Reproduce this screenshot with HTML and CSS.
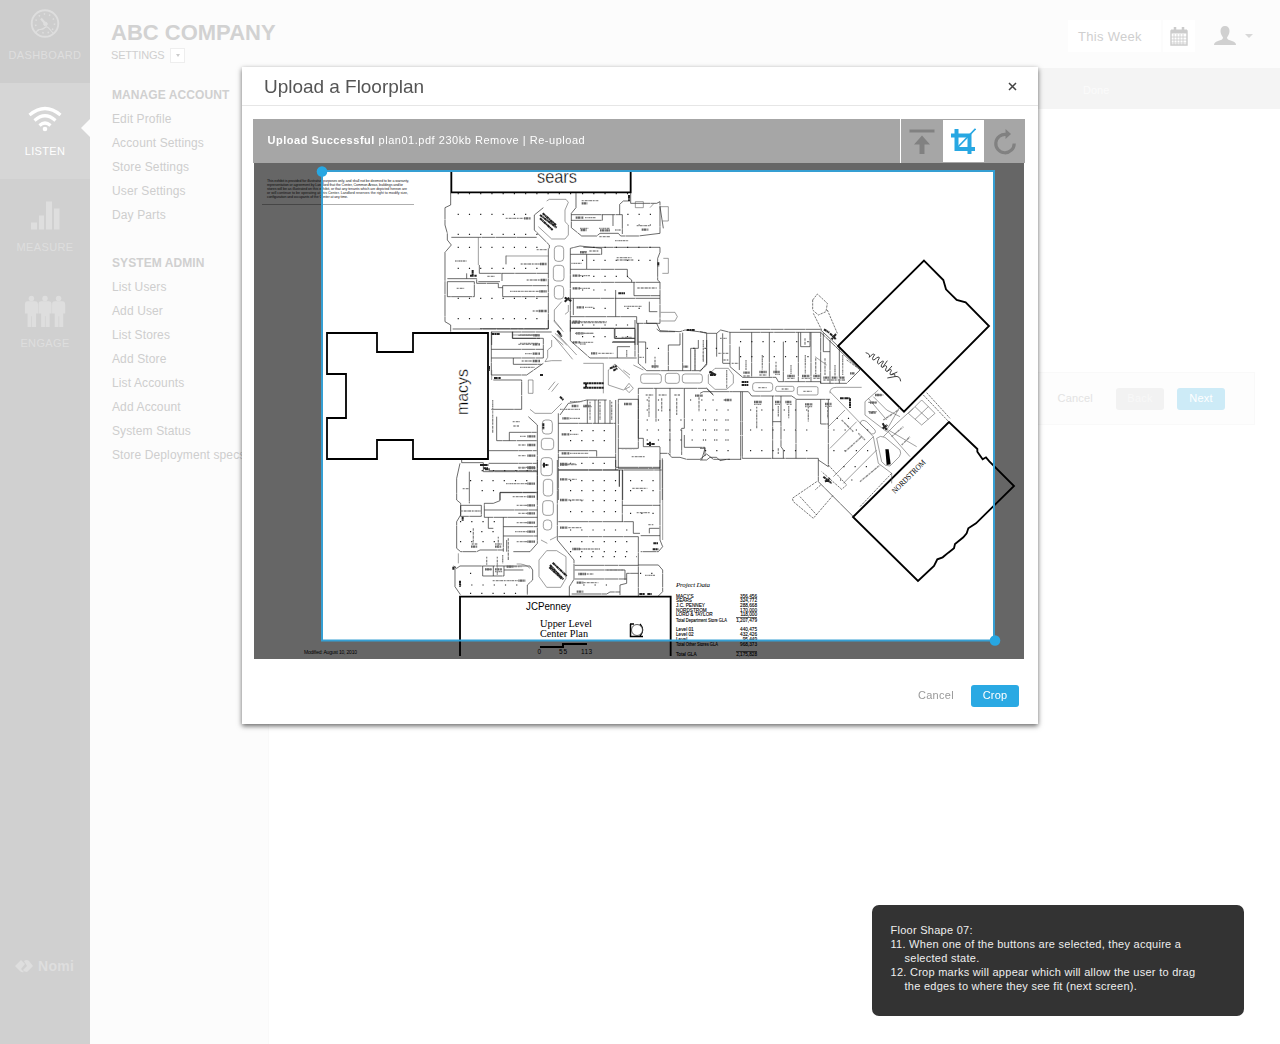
FILE: index.html
```html
<!DOCTYPE html>
<html lang="en">
<head>
<meta charset="utf-8">
<title>Upload a Floorplan</title>
<link rel="stylesheet" href="styles.css">
</head>
<body>
<div class="app">
  <nav class="rail">
    <a class="rail-item first">
      <svg width="32" height="32" viewBox="0 0 32 32" fill="none" stroke="currentColor"><circle cx="16" cy="16" r="13.3" stroke-width="1.9"/><circle cx="16" cy="16" r="9.5" stroke-width="1.6" stroke-dasharray="1.4 4"/><path d="M12 11L17 17" stroke-width="2.2"/><circle cx="16.500" cy="16.500" r="1.800" fill="currentColor"/><path d="M7 26Q8 22 11 22T16 20T21 22T25 26" stroke-width="1.2"/></svg>
      <span>DASHBOARD</span>
    </a>
    <a class="rail-item active">
      <svg width="36" height="32" viewBox="0 0 36 32" fill="none" stroke="currentColor" stroke-width="3.200"><path d="M2.500 11.500Q18-1.500 33.500 11.500M7.500 17Q18 7.500 28.500 17M12.500 22Q18 17 23.500 22"/><circle cx="18" cy="25.500" r="2.300" fill="currentColor" stroke="none"/></svg>
      <span>LISTEN</span>
    </a>
    <a class="rail-item">
      <svg width="32" height="32" viewBox="0 0 32 32" fill="currentColor"><path d="M2 23h6v7H2zM10 16h5v14h-5zM17 2h6v28h-6zM25 9h5.500v21H25z"/></svg>
      <span>MEASURE</span>
    </a>
    <a class="rail-item">
      <svg width="42" height="34" viewBox="0 0 42 34" fill="currentColor"><g id="man"><circle cx="7" cy="3.500" r="2.800"/><path d="M3 6.500h8q2.800 0 2.800 3.500v9h-2v14H7.600V22H6.900v11H3V19H.300v-9q0-3.500 2.700-3.500z"/></g><use href="#man" x="14"/><use href="#man" x="28"/></svg>
      <span>ENGAGE</span>
    </a>
    <div class="brand">
      <svg width="19" height="14" viewBox="0 0 19 14" fill="currentColor"><path d="M6 1l4 4-4 5 3 3q-2 1-4-1L0 7z"/><path d="M9 2q3-2 5 0l4 5-6 6q-3 0-4-2l4-4z"/></svg>
      <span>Nomi</span>
    </div>
  </nav>

  <div class="main">
    <header class="top">
      <div>
        <h1>ABC COMPANY</h1>
        <div class="crumb">SETTINGS <span class="drop"><i></i></span></div>
      </div>
      <div class="tools">
        <span class="week">This Week</span>
        <span class="cal"><svg width="18" height="19" viewBox="0 0 18 19" fill="none" stroke="currentColor"><path d="M1 4h16v14H1z" stroke-width="1.400"/><path d="M1 4.500h16" stroke-width="4"/><path d="M1 10h16M1 13h16M1 16h16M4 7v11M7 7v11M10 7v11M13 7v11" stroke-width=".8"/><path d="M5 0v5M13 0v5" stroke-width="2.500"/></svg></span>
        <svg class="user" width="24" height="20" viewBox="0 0 24 20" fill="currentColor"><path d="M12 0c3 0 4.500 2 4.500 5S15 10 14 11.500c0 2 2 2.500 5 3.500 3 1 4 2 4 4H1c0-2 1-3 4-4 3-1 5-1.500 5-3.500C9 10 7.500 8 7.500 5S9 0 12 0z"/></svg>
        <i class="caret"></i>
      </div>
    </header>
    <div class="body">
      <aside class="side">
        <h2>MANAGE ACCOUNT</h2>
        <ul><li>Edit Profile</li><li>Account Settings</li><li>Store Settings</li><li>User Settings</li><li>Day Parts</li></ul>
        <h2>SYSTEM ADMIN</h2>
        <ul><li>List Users</li><li>Add User</li><li>List Stores</li><li>Add Store</li><li>List Accounts</li><li>Add Account</li><li>System Status</li><li>Store Deployment specs</li></ul>
      </aside>
      <section class="content">
        <div class="bar"><span>Done</span></div>
        <div class="actions"><span class="cancel">Cancel</span><span class="btn back">Back</span><span class="btn next">Next</span></div>
      </section>
    </div>
  </div>
</div>

<div class="overlay">
  <div class="modal">
    <div class="modal-head"><span>Upload a Floorplan</span>
      <svg width="9" height="9" viewBox="0 0 9 9" stroke="#444" stroke-width="1.500"><path d="M1 1l7 7M8 1L1 8"/></svg>
    </div>
    <div class="strip">
      <p><b>Upload Successful</b> plan01.pdf 230kb Remove | Re-upload</p>
      <span class="tool line"><svg width="26" height="26" viewBox="0 0 26 26" fill="currentColor"><path d="M.500 .5h25v3H.500zM13 6.500l8 9h-5.500V25h-5v-9.500H5z"/></svg></span>
      <span class="tool on"><svg width="26" height="27" viewBox="0 0 26 27" fill="none" stroke="currentColor"><path d="M6.500 1v20H25M1 7.500h18.500V26" stroke-width="4"/><path d="M7 20L25.500 .8" stroke-width="1.700"/></svg></span>
      <span class="tool"><svg width="24" height="26" viewBox="0 0 24 26" fill="none" stroke="currentColor"><path d="M13.500 5.500A9.200 9.200 0 1 0 21.200 14.500" stroke-width="3.200"/><path d="M12.500 0l5.500 5-5.500 5z" fill="currentColor" stroke="none"/></svg></span>
    </div>
    <svg class="plan" width="770" height="496" viewBox="254 163 770 496">
      <rect x="254" y="163" width="770" height="496" fill="#fff"/>
      <g class="fine">
        <text x="267" y="181.500" textLength="142">This exhibit is provided for illustrative purposes only, and shall not be deemed to be a warranty,</text>
        <text x="267" y="185.700" textLength="136">representation or agreement by Landlord that the Center, Common Areas, buildings and/or</text>
        <text x="267" y="189.900" textLength="140">stores will be as illustrated on this exhibit, or that any tenants which are depicted hereon are</text>
        <text x="267" y="194.100" textLength="141">or will continue to be operating at this Center. Landlord reserves the right to modify size,</text>
        <text x="267" y="198.300" textLength="81">configuration and occupants of the Center at any time.</text>
      </g>
      <path d="M262 204.500H414" stroke="#777" stroke-width=".6"/>
      <path class="heavy" d="M327 333H377V352H413V333H488V459H413V440H377V459H327V418H346V374H327Z"/>

      <g transform="translate(430 165) scale(.33333)">
        <path class="heavy3" d="M64 20V82H602V20"/>
        <path class="wall" d="M62 84V120L45 128V180L52 205V225L64 240L45 262V470L62 480V500M64 217H320M52 341H140V355H205V368H218M52 350H133V395H52V350M148 300V325H355M145 350H210M216 325V348M218 362H355M218 362V395H355M228 272V298M355 250V492M68 492H355M438 84V128L424 145V188L455 213H500L510 205H565L572 213H625L690 205M424 149H577V207M424 166H517V149M549 149V183M569 149V118L580 108H600M602 84V115H680L690 110V205M421 268H515V250L450 243L421 250V500M460 247H690M470 268V312M421 313H592V335L605 345V352M421 352H690M612 352V392H690M557 375V455M421 400H690V475H620V455H421M421 490H615V540M430 400V450M690 247V262L683 280V345L690 352V400M658 410V440H682M185 500V540M248 500V520H330M548 530H615M622 475V540M340 128L313 150V195L358 240V250M555 490V520H615M690 125L700 190M110 325V341M680 492L690 500H735"/>
        <path class="thin" d="M145 217V300M228 273H355M350 108L358 103H408L415 112L405 135V170L415 180V210L405 222H365L325 185M395 410L373 435V470L400 500M415 420V440L405 448M690 125H715V168H697M700 280H715V325H697M692 442H735L742 455L735 468H692M616 128V110H640V128H616M365 510L400 540M375 505L410 540M248 510H330M660 128L672 115"/>
        <g class="thin"><rect x="373" y="243" width="28" height="46" rx="10"/><rect x="370" y="301" width="32" height="47" rx="10"/><rect x="373" y="362" width="28" height="40" rx="10"/></g>
        <path class="dots" d="M83 86H440M83 148H310M83 208H350M83 247H350M83 310H350M83 400H350M83 461H350M456 86H600M592 148H680M592 180H680M456 286H680M490 247H680M456 334H600M456 375H550M490 430H550M592 430H650M456 480H600M456 515H600"/>
        <path class="lbl" d="M227 160H280M320 254H350M272 297H330M290 345H335M240 379H330M308 438H325M75 288H110M80 370H103M172 334H195M455 107H505M465 158H497M450 190H475M507 190H540M555 195H572M620 182H660M508 215H540M555 227H595M450 260H470M478 258H505M420 295H455M560 278H605M560 285H610M450 332H480M450 370H480M622 369H680M465 427H490M582 424H635M450 470H530M460 505H490M450 532H490M270 510H325M270 535H325"/>
        <path class="tag" d="M282 160H302M330 297H350M332 345H350M328 379H350M326 438H350M437 158H460M510 196H540M428 332H450M428 370H450M440 427H462M428 470H450M438 505H460M428 532H450M635 194H655M450 262H470M452 195H470M455 115H472"/>
        <path class="mark" d="M330 150L380 188M338 145L378 180M330 160L368 195M404 398L424 408M404 410L418 398M597 90V108M120 332H140M128 315V330M565 385H585M685 292V304M385 500L395 515"/>
      </g>

      <g transform="translate(480 320) scale(.33333)">
        <path class="wall" d="M0 26H205V0M34 36V165M34 36H215M97 36V55H190M34 88H190M34 114H190V55M100 114V133H185M34 165H140L190 130M40 180H125V268H34M271 0V62L330 114H470M271 25H465M403 25V55H465M396 67H465M412 114V80H450M465 0V110M475 10V130L500 152H660L680 135V60M497 130V66H475M500 0V10H530L540 32L600 35L615 30L680 38M600 40V75H565V152M608 38V152M632 85V152M645 85V152M655 60V85H632M240 285L265 250L300 245L320 240H380M235 280V310H407V240M322 240V310M345 240V310M355 240V310M375 240V310M390 240V310M235 310V540M407 310V450M235 392H350V412H407M235 450H545M415 445V238H475V385H415M415 445H540M475 355H490V380H540V400H565L575 412H600L620 418H660L680 402L700 418H750M475 355V205H680L700 225M528 205V305M570 205V405M613 205V325H605V405M613 345V382H675V408M547 415V540M540 400V445M428 450V540M418 450V500M50 290V362H170M88 362V337H170M26 392H170M26 430H170M26 452H170M60 540V517H170M172 315V540M145 290L172 315M235 412H350"/>
        <path class="thin" d="M222 0L245 28M222 50L278 118M232 42L290 105M215 60V80L203 90V112L195 125L215 122H245M310 130H370V220M150 268L165 280H215L245 250M145 180H159V220H145ZM385 150L405 132L450 175M450 200L430 210L385 195V150M435 205L447 190L460 205L447 218ZM430 150L450 165M460 135L490 150M35 180V150M205 210L225 185M215 215L235 190"/>
        <g class="thin"><rect x="482" y="162" width="62" height="28" rx="8"/><rect x="556" y="160" width="42" height="30" rx="8"/><rect x="607" y="162" width="60" height="27" rx="8"/><rect x="187" y="300" width="30" height="42" rx="10"/><rect x="184" y="355" width="37" height="34" rx="10"/></g>
        <path class="dots" d="M270 332H400M270 362H400M270 430H400M5 452H165M500 85H560M500 240H560M500 270H600M500 300H740M500 330H740M630 240H740M500 360H740M640 85H740"/>
        <path class="lbl" d="M115 46H160M115 73H155M135 101H155M125 123H155M120 142H165M302 8H380M285 40H340M300 72H318M355 100H400M425 52H455M270 245H305M310 260H335M240 268H300M270 295H300M270 343H295M270 400H325M262 434H290M120 349H138M115 375H138M115 407H138M115 444H138M425 386H470M455 410H495M98 305H120M497 225H520M536 225H560M583 225H600M100 318H118M515 138H535M478 112H492"/>
        <path class="tag" d="M160 46H180M158 73H180M158 101H180M158 123H180M275 8H300M333 100H352M247 295H268M245 343H268M245 400H268M240 434H262M142 349H166M142 375H166M142 407H166M142 444H166M432 252H455M645 227H668M515 140H535M610 140H625M275 258H295M310 258H332"/>
        <path class="lbl" d="M38 240V340M507 230V290M545 235V275M590 235V285M657 232V275M670 60V120M645 90V150M330 245V300M360 245V300M395 245V300M525 110V145M440 90V110"/>
        <path class="mark" d="M310 190H372M310 203H372M318 188V205M390 145L410 138M400 152L412 145M180 165H190M232 32L242 44M42 174H62M240 230L250 240M190 310V328M35 42H60M0 435H20M10 445H25M500 372H525M690 155L705 165M27 138V152M510 365V378M620 30H645"/>
      </g>

      <g transform="translate(700 250) scale(.33333)">
        <path class="heavy3" d="M672 32L730 90L738 118L770 150L797 157L867 228L612 485L414 288Z"/>
        <path class="heavy3" d="M747 516L459 801L654 993L702 948L712 928L728 922L745 908L762 895L765 882L790 862L800 850L805 835L828 820L942 708L868 634L858 622L848 628L832 605V597Z"/>
        <path class="wall" d="M120 238H360L414 288M90 247H362V400M0 245L20 250H50L62 240L90 247V350L128 382M20 250V340L0 365M68 250V340H90M50 250V320M118 290V360M155 247V382M208 247V382M250 275V395M295 247V395M302 247V290H330V247M333 247V395M390 270V400M418 295V400M128 382H228L235 395H362V400H440L480 360L362 247M370 250V305H390M98 425H145L155 438H275L290 448H390M122 425V630M127 425V625H355V695L460 800M218 438V625M243 438V590L250 600V625M288 448V625M362 448V522H385M385 448V650M218 515H243M0 430L10 425H98M20 415L40 435M0 630H20L30 622H50L60 632L80 628H122M355 630L385 650M0 595H15L5 630"/>
        <path class="thin" d="M25 375L45 355H85L100 375V400L80 418H45L25 400ZM390 430Q388 412 410 412H485M390 425L520 560L535 640L575 670V700M495 455V495L560 545M535 420L495 455M530 565Q540 555 555 562L600 600Q605 610 598 620L570 648Q555 650 545 635ZM480 520Q485 505 500 515L525 540Q530 552 515 552ZM435 480L385 530M470 515L390 595M530 600L430 700M520 560L400 680M345 320L380 345M600 470L560 540L630 620M625 490L665 450L705 490L665 525ZM645 508L685 470M645 470L685 508M640 475L590 520L550 560M520 440L560 480L600 500M505 445L560 510M565 540L650 590"/>
        <path class="dash" d="M338 150L352 132L382 160L378 185L355 195L338 180ZM340 190L365 240M382 180L412 250M670 435L747 516M680 428L750 505M350 695L277 745L280 755L340 805L400 735M362 705L345 720M300 740L350 795M385 645L440 705L425 718L365 665M440 330L475 355M575 670L480 770"/>
        <g class="thin"><rect x="158" y="398" width="60" height="26" rx="8"/><rect x="227" y="409" width="55" height="15" rx="5"/><rect x="292" y="410" width="62" height="25" rx="5"/></g>
        <path class="dots" d="M15 480H110M15 510H110M15 540H110M15 570H110M15 602H110M150 480H350M150 540H350M150 602H350M120 275H330M120 320H330M400 540H520M400 602H520M430 650H530M420 690H480M410 505H450"/>
        <path class="lbl" d="M60 265H80M55 310H85M70 330H85M130 378H150M178 375H200M225 373H240M262 385H285M305 385H330M340 385H360M370 390H435M162 463H185M225 463H240M260 463H275M315 470H338M375 469H395M175 413H200M245 417H265M505 457H530M505 485H530M525 435H550M310 424H335M95 340H115"/>
        <path class="tag" d="M130 368H150M178 366H200M220 366H240M262 378H284M306 378H328M340 378H360M370 383H388M395 383H412M420 383H435M450 370H465M162 456H185M225 456H242M256 456H275M315 463H337M375 462H395M75 450H95M510 458H530M508 488H528M525 435H545"/>
        <path class="lbl" d="M138 330V360M187 315V360M228 335V362M273 345V372M316 315V372M347 325V372M375 325V375M405 345V378M428 315V375M170 470V535M235 468V500M266 468V505M325 470V515M383 470V505M80 360V415M10 305V335M235 595V612M315 265V285M425 510L460 545M475 550L495 570M435 605L485 560M480 695L540 645M550 510L595 480M605 585L630 560M575 560L610 530"/>
        <path class="mark" d="M28 365L48 375M30 375H45M125 396H145M125 405H145M420 445H450V475M390 250L408 268M408 252L395 268M372 238L388 248M548 520L560 540M548 535L562 525M370 680L395 700M375 695L390 685"/>
        <path d="M556 598H566L572 643L560 645Z"/>
        <path d="M497 308Q512 312 508 322Q520 308 524 314Q512 330 522 330Q538 316 538 324Q528 340 536 342Q552 328 550 336Q538 352 548 352L562 332M548 352Q560 342 560 352Q552 364 562 364L576 348M562 364Q574 354 574 362Q566 376 574 374L592 366M574 374Q588 368 584 380L562 384M584 380Q600 376 602 394" fill="none" stroke="#222" stroke-width="2.600"/>
      </g>

      <g transform="translate(440 460) scale(.33333)">
        <path class="heavy3" d="M60 588V410H692V588"/>
        <path class="wall" d="M65 0V8H130V35H292M60 10L50 55V120L62 130V165L50 185V265L62 275H110L120 270H190M190 172V275M220 275H270L292 250V0M180 122V98H292M292 172H133V130H160L180 122M133 150H292M62 136H124V169H62ZM88 35V130M145 172V205H160M190 200H292M190 228H292M200 240V275M40 318L50 325L60 318H270L278 330V360L262 375V405M45 318V380L62 405M128 318V348H192V318M192 330H250M160 318V348M352 0V240L402 300V358L388 380V408M355 30H535M527 0V22H660M547 30V185M355 185H580V220H600M547 136H660M355 230H595V408M660 0V240L668 260L655 275H602M602 227H660M628 220V205H658M404 316H595M404 330H555V360M404 357H560M540 405V375L560 370V340H595M595 315H655L668 330V395L655 408M538 30V80M395 402H500L510 396H540"/>
        <path class="thin" d="M320 272H350L378 290V355L362 382H320L297 350V300ZM303 240L322 250M330 240L350 230M55 280V310M230 312Q255 310 270 325M668 0V240"/>
        <g class="thin"><rect x="303" y="-7" width="34" height="54" rx="10"/><rect x="310" y="58" width="28" height="50" rx="10"/><rect x="308" y="122" width="32" height="44" rx="10"/><rect x="310" y="180" width="25" height="30" rx="10"/></g>
        <path class="dots" d="M90 62H280M125 92H180M90 215H180M60 185H180M60 245H180M390 62H530M390 92H530M390 122H530M390 155H530M390 210H590M390 245H590M390 275H590M420 290H590M570 62H650M570 92H650M570 160H650M90 340H120M60 375H250M90 400H250M430 375H530M600 340H650"/>
        <path class="lbl" d="M235 22H262M198 71H262M218 110H262M230 136H262M235 160H262M230 188H262M225 215H262M230 245H262M62 153H122M385 12H408M385 58H410M385 120H430M385 203H425M420 267H480M440 342H460M430 368H475M577 85H622M590 158H630M625 194H640M615 346H645M158 362H235M200 320H245M68 86H88M95 252H112M135 328H155M165 252H185M165 335H188M500 330H550"/>
        <path class="tag" d="M262 22H285M262 71H285M262 110H285M262 136H285M262 160H285M262 188H285M262 215H285M262 245H285M360 12H382M360 58H382M360 120H382M360 203H382M397 267H420M415 342H438M410 368H430M410 395H430M93 260H112M165 260H184M200 320H220M235 362H256M135 328H155M165 328H186"/>
        <path class="lbl" d="M100 205V250M175 230V262M140 290V315M172 290V345M205 235V300M188 285V310"/>
        <path class="mark" d="M330 315L370 358M338 308L380 348M328 322L365 356M308 15H325M312 8V24M128 15H145M135 28H150M640 250H655M638 268H655M60 362V380M598 402H615M622 402H635M40 320V330M68 170V182"/>
      </g>

      <g class="names">
        <text class="light" x="537" y="183" font-size="19" textLength="40" lengthAdjust="spacingAndGlyphs">sears</text>
        <text class="light" transform="translate(468 415) rotate(-90)" font-size="16" textLength="46" lengthAdjust="spacingAndGlyphs">macys</text>
        <text transform="translate(895 494) rotate(-45)" font-size="8" textLength="44" lengthAdjust="spacingAndGlyphs" class="serif">NORDSTROM</text>
        <text x="526" y="610" font-size="10.500" textLength="45" lengthAdjust="spacingAndGlyphs">JCPenney</text>
        <text x="540" y="627" font-size="10" textLength="52" lengthAdjust="spacingAndGlyphs" class="serif">Upper Level</text>
        <text x="540" y="636.500" font-size="9.500" textLength="48" lengthAdjust="spacingAndGlyphs" class="serif">Center Plan</text>
        <text x="304" y="654" font-size="5" textLength="53">Modified: August 10, 2010</text>
        <text x="537.500" y="654" font-size="6.500">0</text><text x="559" y="654" font-size="6.500" textLength="8">55</text><text x="581" y="654" font-size="6.500" textLength="11">113</text>
        <text x="676" y="587" font-size="7" textLength="34" class="serif it">Project Data</text>
      </g>
      <g class="data">
        <text x="676" y="597.500">MACY'S</text><text x="676" y="602">SEARS</text><text x="676" y="606.500">J.C. PENNEY</text><text x="676" y="611.500">NORDSTROM</text><text x="676" y="616">LORD &amp; TAYLOR</text><text x="676" y="622" textLength="51" lengthAdjust="spacingAndGlyphs">Total Department Store GLA</text>
        <text x="676" y="631">Level 01</text><text x="676" y="636">Level 02</text><text x="676" y="640.500">Level</text><text x="676" y="646" textLength="42" lengthAdjust="spacingAndGlyphs">Total Other Stores GLA</text><text x="676" y="656">Total GLA</text>
        <g text-anchor="end"><text x="757" y="597.500">356,456</text><text x="757" y="602">324,772</text><text x="757" y="606.500">288,668</text><text x="757" y="611.500">170,000</text><text x="757" y="616">118,000</text><text x="757" y="622">1,207,479</text><text x="757" y="631">440,475</text><text x="757" y="636">432,426</text><text x="757" y="640.500">95,449</text><text x="757" y="646">968,373</text><text x="757" y="656">2,175,828</text></g>
      </g>
      <path d="M736 617.500H757M736 651.500H757" stroke="#000" stroke-width=".6"/>
      <path d="M540 647H563V644H587" fill="none" stroke="#000" stroke-width="2"/>
      <path d="M630.500 624V636.500H643M630 624L634 624M640 624Q645 630 640 636" fill="none" stroke="#000" stroke-width="1.500"/><circle cx="637" cy="630" r="5.500" fill="#fff" stroke="#333" stroke-width=".8"/>

      <path class="shade" fill-rule="evenodd" d="M254 163H1024V659H254ZM322 171V640H994V171Z"/>
      <rect x="322" y="171" width="672" height="469.500" fill="none" stroke="#359fd3" stroke-width="2"/>
      <circle cx="322" cy="171.500" r="5.300" fill="#27a7e2"/><circle cx="995" cy="640.500" r="5.300" fill="#27a7e2"/>
    </svg>
    <div class="modal-foot"><span>Cancel</span><span class="btn crop">Crop</span></div>
  </div>
</div>

<div class="note">
  <p>Floor Shape 07:</p>
  <p class="step">11. When one of the buttons are selected, they acquire a<br>selected state.</p>
  <p class="step">12. Crop marks will appear which will allow the user to drag<br>the edges to where they see fit (next screen).</p>
</div>
</body>
</html>
```
FILE: styles.css
```css
* { box-sizing: border-box; margin: 0; padding: 0; }
body { width: 1280px; height: 1044px; overflow: hidden; background: #fff; font-family: "Liberation Sans", Arial, sans-serif; font-size: 11px; }
.app { display: flex; height: 1044px; }

.rail { width: 90px; background: #d0d0d0; color: #dedede; display: flex; flex-direction: column; }
.rail-item { height: 96px; padding-top: 20px; display: flex; flex-direction: column; align-items: center; position: relative; letter-spacing: .35px; }
.rail-item svg { height: 33px; flex: none; }
.rail-item span { margin-top: 8px; line-height: 14px; }
.rail-item.first { height: 83px; padding-top: 7px; background: #cdcdcd; }
.rail-item.active { background: #d6d6d6; color: #fff; }
.rail-item.active::after { content: ""; position: absolute; right: 0; top: 36px; border: 9px solid transparent; border-left: 0; border-right-color: #fcfcfc; }
.brand { margin-top: auto; margin-bottom: 69px; padding-left: 15px; display: flex; align-items: center; gap: 4px; font: bold 14px/18px "Liberation Sans", Arial, sans-serif; letter-spacing: .3px; }

.main { flex: 1; display: flex; flex-direction: column; }
.top { height: 68px; background: #fcfcfc; display: flex; justify-content: space-between; padding: 20px 27px 0 21px; color: #cfcfcf; }
h1 { font-size: 22px; line-height: 25px; color: #d2d2d2; }
.crumb { display: flex; align-items: center; gap: 6px; line-height: 15px; margin-top: 3px; letter-spacing: -.2px; }
.drop { width: 15px; height: 15px; border: 1px solid #eee; background: #fff; display: flex; align-items: center; justify-content: center; }
.drop i { border: 2px solid transparent; border-top: 3px solid #ccc; border-bottom: 0; }
.tools { display: flex; align-items: center; height: 32px; }
.week { width: 93px; height: 32px; padding-left: 10px; background: #fff; font-size: 13px; line-height: 34px; letter-spacing: .3px; }
.cal { width: 32px; height: 32px; margin-left: 2px; background: #fff; display: flex; align-items: center; justify-content: center; color: #ccc; }
.user { margin-left: 18px; color: #d0d0d0; }
.caret { margin-left: 8px; border: 4px solid transparent; border-top: 4px solid #d8d8d8; border-bottom: 0; }
.body { flex: 1; display: flex; }
.side { width: 179px; padding: 15px 0 0 22px; background: #fcfcfc; border-right: 1px solid #f9f9f9; color: #cecece; font-size: 12px; line-height: 24px; white-space: nowrap; }
.side h2 { font-size: 12px; color: #d0d0d0; letter-spacing: .08px; }
.side ul { list-style: none; margin-bottom: 24px; letter-spacing: .12px; }
.content { flex: 1; }
.bar { height: 41px; background: #f4f4f4; color: #fbfbfb; padding-left: 814px; line-height: 44px; }
.actions { height: 53px; width: 986px; margin-top: 263px; padding-right: 29px; border: 1px solid #f9f9f9; background: #fdfdfd; display: flex; align-items: center; justify-content: flex-end; }
.btn { width: 48px; height: 22px; border-radius: 3px; line-height: 21px; text-align: center; letter-spacing: .2px; color: #fff; }
.cancel { color: #e3e3e3; margin-right: 23px; letter-spacing: .2px; line-height: 21px; height: 22px; }
.back { background: #f2f2f2; color: #f8f8f8; margin-right: 13px; }
.next { background: #cdebf7; }

.overlay { position: fixed; inset: 0; display: flex; justify-content: center; align-items: flex-start; padding-top: 67px; }
.modal { width: 796px; height: 657px; background: #fff; box-shadow: 0 2px 5px rgba(0,0,0,.6); padding: 0 13px 0 11px; }
.modal-head { margin: 0 -13px 13px -11px; height: 39px; padding: 1px 21px 0 22px; border-bottom: 1px solid #e6e6e6; display: flex; align-items: center; justify-content: space-between; font-size: 19px; color: #555; letter-spacing: -.03px; }
.strip { height: 44px; background: #a6a6a6; display: flex; color: #fff; letter-spacing: .53px; }
.strip p { flex: 1; padding-left: 14.5px; line-height: 42px; }
.tool { width: 41px; padding-top: 2px; display: flex; align-items: center; justify-content: center; color: #818181; }
.tool.line { width: 43px; border-left: 1px solid #fff; padding-right: 1px; }
.tool.on { background: #fff; color: #27a7e2; margin: 1px 0; padding: 0 1px 0 0; }
.plan { display: block; margin-left: 1px; }
.modal-foot { display: flex; justify-content: flex-end; align-items: center; gap: 17px; height: 22px; line-height: 21px; margin: 26px 6px 0 0; color: #999; letter-spacing: .3px; }
.modal-foot span { height: 22px; }
.crop { background: #2aa9e3; }

.heavy, .heavy3, .wall, .thin, .dash, .dots, .lbl, .tag, .mark { fill: none; stroke: #000; }
.heavy { stroke-width: 1.8; }
.heavy3 { stroke-width: 5.5; }
.wall { stroke-width: 2; stroke: #222; stroke-dasharray: 90 1 40 1.5 63 1; }
.thin { stroke-width: 1.7; stroke: #555; }
.dash { stroke-width: 2; stroke: #333; stroke-dasharray: 7 3; }
.dots { stroke-width: 3.5; stroke: #222; stroke-dasharray: 3.5 30.2; }
.lbl { stroke-width: 4; stroke: #8a8a8a; stroke-dasharray: 5 1 2 2 7 1 3 1.5 9 2; }
.tag { stroke-width: 7; stroke: #666; stroke-dasharray: 4 1 8 1.5 3 1 6 1; }
.mark { stroke-width: 6; stroke: #222; stroke-dasharray: 9 1 4 1; }
.fine { font: 3.6px "Liberation Sans", Arial, sans-serif; fill: #222; }
.names { fill: #000; font-family: "Liberation Sans", Arial, sans-serif; }
.light { stroke: #fff; stroke-width: .35; }
.serif { font-family: "Liberation Serif", serif; }
.it { font-style: italic; }
.data { font-size: 4.7px; fill: #000; stroke: #000; stroke-width: .1; }
.shade { fill: rgba(0,0,0,.6); }

.note { position: absolute; left: 872px; top: 905px; width: 372px; height: 111px; border-radius: 7px; background: #333; color: #eee; padding: 18px 19px 0 18.5px; line-height: 14px; letter-spacing: .27px; }
.step { padding-left: 14px; text-indent: -14px; }
```
